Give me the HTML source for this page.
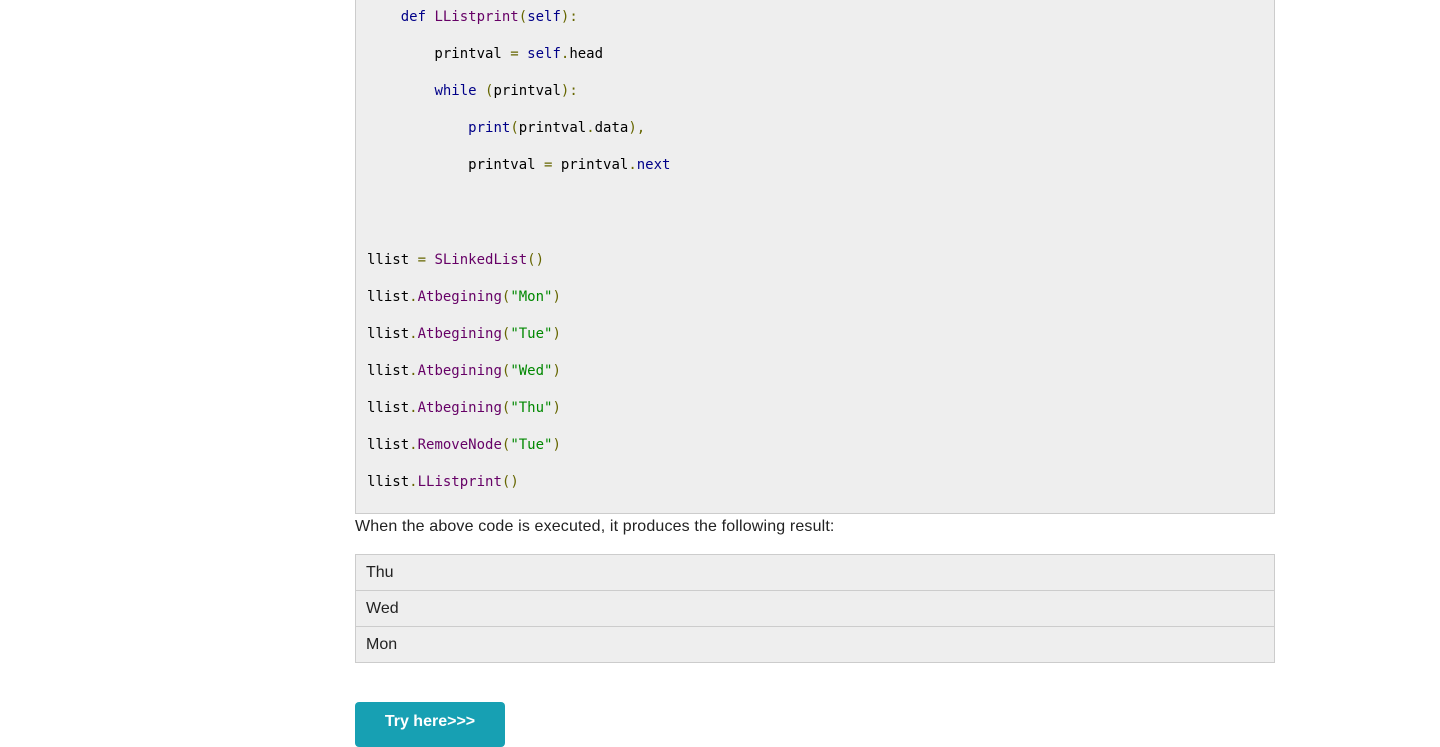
<!DOCTYPE html>
<html><head><style>
body{margin:0;width:1440px;height:747px;overflow:hidden;background:#fff;font-family:"Liberation Sans",Arial,sans-serif;color:#222;position:relative}
.code{position:absolute;left:355px;top:-2px;width:918px;height:514px;background:#eee;border:1px solid #ccc;}
.l{position:absolute;left:11px;font-family:"DejaVu Sans Mono",monospace;font-size:14px;line-height:20px;white-space:pre;color:#000}
.k{color:#000088}.f{color:#660066}.p{color:#666600}.s{color:#008800}
.res{position:absolute;left:355px;top:517px;font-size:16px;line-height:20px;letter-spacing:0.15px}
.row{position:absolute;left:355px;width:918px;height:35px;background:#eee;border:1px solid #ccc;font-size:16px;line-height:35px;text-indent:10px}
.btn{position:absolute;left:355px;top:702px;width:150px;height:45px;background:#17a0b3;border-radius:4px;color:#fff;font-size:16px;font-weight:bold;text-align:center;line-height:40px}
</style></head><body>
<div class="code">
<div class="l" style="top:8px">    <span class="k">def</span> <span class="f">LListprint</span><span class="p">(</span><span class="k">self</span><span class="p">):</span></div>
<div class="l" style="top:45px">        printval <span class="p">=</span> <span class="k">self</span><span class="p">.</span>head</div>
<div class="l" style="top:82px">        <span class="k">while</span> <span class="p">(</span>printval<span class="p">):</span></div>
<div class="l" style="top:119px">            <span class="k">print</span><span class="p">(</span>printval<span class="p">.</span>data<span class="p">),</span></div>
<div class="l" style="top:156px">            printval <span class="p">=</span> printval<span class="p">.</span><span class="k">next</span></div>
<div class="l" style="top:251px">llist <span class="p">=</span> <span class="f">SLinkedList</span><span class="p">()</span></div>
<div class="l" style="top:288px">llist<span class="p">.</span><span class="f">Atbegining</span><span class="p">(</span><span class="s">"Mon"</span><span class="p">)</span></div>
<div class="l" style="top:325px">llist<span class="p">.</span><span class="f">Atbegining</span><span class="p">(</span><span class="s">"Tue"</span><span class="p">)</span></div>
<div class="l" style="top:362px">llist<span class="p">.</span><span class="f">Atbegining</span><span class="p">(</span><span class="s">"Wed"</span><span class="p">)</span></div>
<div class="l" style="top:399px">llist<span class="p">.</span><span class="f">Atbegining</span><span class="p">(</span><span class="s">"Thu"</span><span class="p">)</span></div>
<div class="l" style="top:436px">llist<span class="p">.</span><span class="f">RemoveNode</span><span class="p">(</span><span class="s">"Tue"</span><span class="p">)</span></div>
<div class="l" style="top:473px">llist<span class="p">.</span><span class="f">LListprint</span><span class="p">()</span></div>
</div>
<div class="res">When the above code is executed, it produces the following result:</div>
<div class="row" style="top:554px">Thu</div>
<div class="row" style="top:590px">Wed</div>
<div class="row" style="top:626px">Mon</div>
<div class="btn">Try here&gt;&gt;&gt;</div>
</body></html>
